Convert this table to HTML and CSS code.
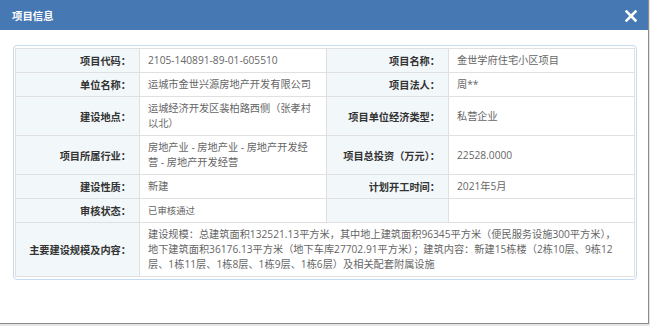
FILE: index.html
```html
<!DOCTYPE html>
<html lang="zh-CN">
<head>
<meta charset="utf-8">
<title>项目信息</title>
<link rel="stylesheet" href="styles.css">
</head>
<body>
<div class="dialog">
  <div class="dialog-header">
    <span class="dialog-title">项目信息</span>
    <span class="dialog-close" aria-label="关闭">
      <svg width="12" height="12" viewBox="0 0 12 12"><path d="M1.5 1.5 L10.5 10.5 M10.5 1.5 L1.5 10.5" stroke="#fff" stroke-width="2.6" stroke-linecap="square"/></svg>
    </span>
  </div>
  <div class="dialog-body">
    <div class="info-box">
      <table class="info-table">
        <colgroup>
          <col class="c-label1"><col class="c-value1"><col class="c-label2"><col class="c-value2">
        </colgroup>
        <tr>
          <th>项目代码：</th><td>2105-140891-89-01-605510</td>
          <th>项目名称：</th><td>金世学府住宅小区项目</td>
        </tr>
        <tr>
          <th>单位名称：</th><td>运城市金世兴源房地产开发有限公司</td>
          <th>项目法人：</th><td>周**</td>
        </tr>
        <tr>
          <th>建设地点：</th><td>运城经济开发区裴柏路西侧（张孝村<br>以北）</td>
          <th>项目单位经济类型：</th><td>私营企业</td>
        </tr>
        <tr>
          <th>项目所属行业：</th><td>房地产业 - 房地产业 - 房地产开发经<br>营 - 房地产开发经营</td>
          <th>项目总投资（万元）：</th><td>22528.0000</td>
        </tr>
        <tr>
          <th>建设性质：</th><td>新建</td>
          <th>计划开工时间：</th><td>2021年5月</td>
        </tr>
        <tr>
          <th>审核状态：</th><td class="small">已审核通过</td>
          <th></th><td></td>
        </tr>
        <tr>
          <th>主要建设规模及内容：</th>
          <td colspan="3">建设规模：总建筑面积132521.13平方米，其中地上建筑面积96345平方米（便民服务设施300平方米），<br>地下建筑面积36176.13平方米（地下车库27702.91平方米）；建筑内容：新建15栋楼（2栋10层、9栋12<br>层、1栋11层、1栋8层、1栋9层、1栋6层）及相关配套附属设施</td>
        </tr>
      </table>
    </div>
  </div>
</div>
</body>
</html>
```
FILE: styles.css
```css
html, body {
  margin: 0;
  padding: 0;
}
body {
  background: #e6e6e6;
  font-family: "Open Sans", "Noto Sans CJK SC", sans-serif;
  font-size: 10.2px;
  width: 650px;
  height: 326px;
  overflow: hidden;
}
.dialog {
  width: 648px;
  height: 323px;
  background: #fff;
  border-right: 1px solid #8a8a8a;
  border-bottom: 1px solid #8a8a8a;
}
.dialog-header {
  height: 30px;
  background: #4678b3;
  display: flex;
  align-items: center;
  justify-content: space-between;
  padding: 0 11px 0 12px;
}
.dialog-title {
  color: #fff;
  font-weight: bold;
  font-size: 10.4px;
  font-family: "Noto Sans CJK SC", sans-serif;
}
.dialog-close {
  display: flex;
  width: 12px;
  height: 12px;
  margin-top: 2px;
}
.dialog-body {
  padding: 15px 11px 0 13px;
}
.info-box {
  border: 1px solid #c3daf0;
  border-radius: 4px;
  padding: 2px 2px 2px 1px;
}
.info-table {
  width: 619px;
  table-layout: fixed;
  border-collapse: collapse;
}
.c-label1 { width: 124px; }
.c-value1 { width: 187px; }
.c-label2 { width: 122px; }
.c-value2 { width: 186px; }
.info-table th,
.info-table td {
  border: 1px solid #e0e0e0;
  padding: 4px 8px 4px 8px;
  line-height: 15px;
  vertical-align: middle;
}
.info-table th {
  background: #f2f7fa;
  color: #333;
  font-weight: bold;
  text-align: right;
  font-family: "Noto Sans CJK SC", sans-serif;
  padding-right: 8px;
}
.info-table td {
  color: #666;
  text-align: left;
  background: #fff;
}
.info-table td.small {
  font-size: 9.4px;
}
```
